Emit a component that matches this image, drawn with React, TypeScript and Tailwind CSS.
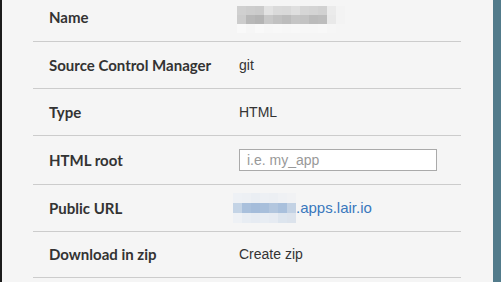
const Blur = ({ cells, h }: { cells: string[][]; h: string }) => (
  <div className="flex flex-col">
    {cells.map((row, i) => (
      <div key={i} className={`flex ${h}`}>
        {row.map((c, j) => (
          <div key={j} className="w-[9px] h-full" style={{ backgroundColor: c }} />
        ))}
      </div>
    ))}
  </div>
);

const nameCells = [
  ["#d0d0d0", "#cdcdcd", "#cbcbcb", "#e2e2e2", "#dadada", "#d9d9d9", "#dfdfdf", "#d6d6d6", "#d4d4d4", "#d1d1d1", "#ebebeb", "#f3f3f3"],
  ["#cccccc", "#b8b8b8", "#b4b4b4", "#c8c8c8", "#c1c1c1", "#bcbcbc", "#c5c5c5", "#c3c3c3", "#bbbbbb", "#bdbdbd", "#e9e9e9", "#f3f3f3"],
  ["#f9f9f9", "#f6f6f6", "#f9f9f9", "#f7f7f7", "#f8f8f8", "#f7f7f7", "#f8f8f8", "#f7f7f7", "#f7f7f7", "#f8f8f8", "#f6f6f6", "#f5f5f5"],
];

const urlCells = [
  ["#eef1f5", "#edf0f4", "#eaeef3", "#edf0f4", "#eceff3", "#eff1f4", "#f1f2f4"],
  ["#c4d4e6", "#a9c0dc", "#a4bcda", "#a8bfdb", "#b2c6de", "#a9c0dc", "#c3d2e4"],
  ["#eef1f5", "#e8edf3", "#e6ebf2", "#e8edf3", "#e6ebf2", "#dde5ee", "#dce3ec"],
];

const Row = ({ label, children, h }: { label: string; children: React.ReactNode; h: string }) => (
  <div className={`flex items-center ${h} border-b border-[#cccccc]`}>
    <div className="w-[206px] pl-[16px] font-['Lato'] font-bold text-[15px] text-[#333333]">{label}</div>
    <div className="flex items-center font-['Liberation_Sans'] text-[14px] text-[#333333]">{children}</div>
  </div>
);

export default function App() {
  return (
    <div className="w-[501px] h-[282px] bg-[#f5f5f5] flex overflow-hidden">
      <div className="w-[2px] bg-[#1c1c1c]" />
      <div className="flex-1 pl-[31px] pr-[32px]">
        <div className="mt-[-6px] flex flex-col">
          <Row label="Name" h="h-[48px]">
            <div className="ml-[-2px] pt-[4px]">
              <Blur cells={nameCells} h="h-[9px]" />
            </div>
          </Row>
          <Row label="Source Control Manager" h="h-[47px]">git</Row>
          <Row label="Type" h="h-[47px]">HTML</Row>
          <Row label="HTML root" h="h-[49px]">
            <input
              className="w-[198px] h-[22px] border border-[#aaaaaa] bg-white px-[7px] text-[14px] font-['Liberation_Sans'] outline-none placeholder:text-[#999999]"
              placeholder="i.e. my_app"
            />
          </Row>
          <Row label="Public URL" h="h-[47px]">
            <div className="ml-[-6px] flex items-center">
              <Blur cells={urlCells} h="h-[10px]" />
              <span className="text-[#3a78bd] text-[15px]">.apps.lair.io</span>
            </div>
          </Row>
          <Row label="Download in zip" h="h-[46px]">Create zip</Row>
        </div>
      </div>
      <div className="w-[8px] bg-[#527b8b]" />
    </div>
  );
}
